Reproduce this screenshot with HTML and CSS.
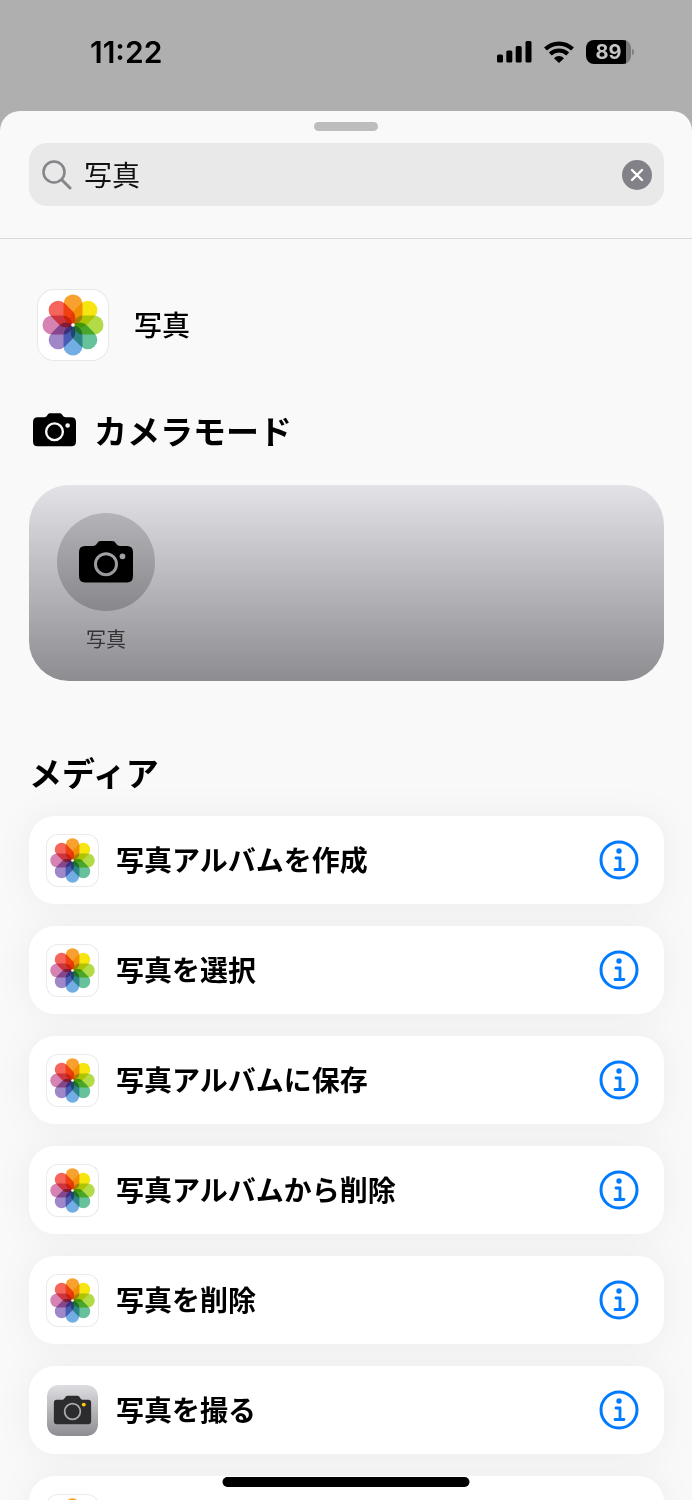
FILE: index.html
```html
<!DOCTYPE html>
<html lang="ja">
  <head>
    <meta charset="UTF-8" />
    <meta name="viewport" content="width=device-width, initial-scale=1.0" />
    <title>写真</title>
    <link rel="stylesheet" href="styles.css" />
  </head>
  <body>
    <!-- shared icons -->
    <svg class="sprite" aria-hidden="true">
      <defs>
        <linearGradient id="steel" x1="0" y1="0" x2="0" y2="1">
          <stop offset="0" stop-color="#dedde2" />
          <stop offset="1" stop-color="#8e8d92" />
        </linearGradient>
      </defs>
      <symbol id="photos" viewBox="-35 -35 70 70">
        <g class="petals">
          <rect x="-9.5" y="-30.5" width="19" height="30" rx="9.5" fill="#f9a12f" />
          <rect x="-9.5" y="-30.5" width="19" height="30" rx="9.5" fill="#f6e50f" transform="rotate(45)" />
          <rect x="-9.5" y="-30.5" width="19" height="30" rx="9.5" fill="#b3da47" transform="rotate(90)" />
          <rect x="-9.5" y="-30.5" width="19" height="30" rx="9.5" fill="#67c29b" transform="rotate(135)" />
          <rect x="-9.5" y="-30.5" width="19" height="30" rx="9.5" fill="#72ade4" transform="rotate(180)" />
          <rect x="-9.5" y="-30.5" width="19" height="30" rx="9.5" fill="#a088c8" transform="rotate(225)" />
          <rect x="-9.5" y="-30.5" width="19" height="30" rx="9.5" fill="#d583b2" transform="rotate(270)" />
          <rect x="-9.5" y="-30.5" width="19" height="30" rx="9.5" fill="#f5655c" transform="rotate(315)" />
        </g>
        <circle r="1.800" fill="#fff" />
      </symbol>
      <symbol id="camera" viewBox="0 0 54 42">
        <path fill="currentColor" fill-rule="evenodd" d="M6 5H14C16 5 17 4 18 2.500C19 .8 20 0 22 0H33C35 0 36 .8 37 2.500C38 4 39 5 41 5H48Q54 5 54 11V35Q54 41.500 48 41.500H6Q0 41.500 0 35V11Q0 5 6 5ZM27 11.200A12 12 0 1 0 27 35.200A12 12 0 1 0 27 11.200ZM43.500 12.400A2.900 2.900 0 1 0 43.500 18.200A2.900 2.900 0 1 0 43.500 12.400Z" />
        <circle cx="27" cy="23.200" r="9" fill="currentColor" />
      </symbol>
      <symbol id="camera-app" viewBox="0 0 52 52">
        <rect width="52" height="52" rx="11" fill="url(#steel)" />
        <path fill="#2c2c2e" d="M10 15H16C18 15 18.500 11 21 11H31C33.500 11 34 15 36 15H42Q45 15 45 18V37Q45 40 42 40H10Q7 40 7 37V18Q7 15 10 15Z" />
        <circle cx="26" cy="27" r="8" fill="none" stroke="#aaa9ae" stroke-width="1.800" />
        <circle cx="37.500" cy="20" r="2" fill="#fc0" />
      </symbol>
      <symbol id="info" viewBox="0 0 40 40">
        <circle cx="20" cy="20" r="18" fill="none" stroke="currentColor" stroke-width="3" />
        <circle cx="20" cy="11" r="2.700" fill="currentColor" />
        <path d="M17 18H21V29M16 29.500H25" fill="none" stroke="currentColor" stroke-width="2.800" stroke-linecap="round" stroke-linejoin="round" />
      </symbol>
    </svg>

    <header class="status-bar">
      <time>11:22</time>
      <div class="status-icons">
        <svg width="35" height="22" viewBox="0 0 35 22">
          <rect y="13.500" width="6" height="8" rx="1.500" />
          <rect x="9.300" y="9.500" width="6" height="12" rx="1.500" />
          <rect x="18.700" y="5" width="6" height="16.500" rx="1.500" />
          <rect x="28.500" width="6" height="21.500" rx="1.500" />
        </svg>
        <svg width="30" height="22" viewBox="0 0 30 22">
          <g fill="none" stroke="#000" stroke-width="4.200">
            <path d="M1.500 8A19.500 19.500 0 0 1 28.500 8" />
            <path d="M6.300 13A12.500 12.500 0 0 1 23.700 13" />
          </g>
          <path d="M15 22L10 17.200A7 7 0 0 1 20 17.200Z" />
        </svg>
        <div class="battery"><span>89</span></div>
      </div>
    </header>

    <main class="sheet">
      <div class="grabber"></div>
      <form class="search">
        <svg width="30" height="30" viewBox="0 0 30 30" fill="none" stroke="#85858a" stroke-width="2.600" stroke-linecap="round">
          <circle cx="12" cy="12" r="10.500" />
          <path d="M20 20L28 28" stroke-width="3" />
        </svg>
        <input type="text" aria-label="検索" value="写真" />
        <button type="reset" class="clear" aria-label="消去">
          <svg width="30" height="30" viewBox="0 0 30 30">
            <circle cx="15" cy="15" r="15" fill="#828187" />
            <path d="M10 10L20 20M20 10L10 20" stroke="#fff" stroke-width="2.400" stroke-linecap="round" />
          </svg>
        </button>
      </form>

      <div class="results">
        <a href="#" class="app">
          <svg class="app-icon"><use href="#photos" /></svg>
          <span>写真</span>
        </a>

        <h2 class="mode-title">
          <svg><use href="#camera" /></svg>
          カメラモード
        </h2>
        <section class="mode-card">
          <button class="mode">
            <span class="mode-icon"><svg width="54" height="42"><use href="#camera" /></svg></span>
            写真
          </button>
        </section>

        <h2 class="media-title">メディア</h2>
        <ul class="actions">
          <li>
            <svg class="action-icon"><use href="#photos" /></svg>
            <span>写真アルバムを作成</span>
            <button aria-label="情報"><svg><use href="#info" /></svg></button>
          </li>
          <li>
            <svg class="action-icon"><use href="#photos" /></svg>
            <span>写真を選択</span>
            <button aria-label="情報"><svg><use href="#info" /></svg></button>
          </li>
          <li>
            <svg class="action-icon"><use href="#photos" /></svg>
            <span>写真アルバムに保存</span>
            <button aria-label="情報"><svg><use href="#info" /></svg></button>
          </li>
          <li>
            <svg class="action-icon"><use href="#photos" /></svg>
            <span>写真アルバムから削除</span>
            <button aria-label="情報"><svg><use href="#info" /></svg></button>
          </li>
          <li>
            <svg class="action-icon"><use href="#photos" /></svg>
            <span>写真を削除</span>
            <button aria-label="情報"><svg><use href="#info" /></svg></button>
          </li>
          <li>
            <svg class="action-icon camera"><use href="#camera-app" /></svg>
            <span>写真を撮る</span>
            <button aria-label="情報"><svg><use href="#info" /></svg></button>
          </li>
          <li>
            <svg class="action-icon"><use href="#photos" /></svg>
            <span></span>
            <button aria-label="情報"><svg><use href="#info" /></svg></button>
          </li>
        </ul>
      </div>
    </main>

    <div class="home-indicator"></div>
  </body>
</html>
```
FILE: styles.css
```css
* {
  box-sizing: border-box;
}

body {
  margin: 0;
  height: 100vh;
  overflow: hidden;
  display: flex;
  flex-direction: column;
  background: #afafb0;
  color: #000;
  font-family: "Noto Sans CJK JP", sans-serif;
}

svg {
  display: block;
  flex-shrink: 0;
}

button {
  padding: 0;
  border: none;
  background: none;
  color: inherit;
  font-family: inherit;
  cursor: pointer;
}

h2 {
  margin: 0;
  font-size: 33px;
  font-weight: 600;
  line-height: 44px;
}

.sprite {
  position: absolute;
  width: 0;
  height: 0;
}

.petals {
  isolation: isolate;
}

.petals rect {
  mix-blend-mode: multiply;
}

/* status bar */
.status-bar {
  display: flex;
  justify-content: space-between;
  align-items: center;
  flex-shrink: 0;
  height: 111px;
  padding: 0 61px 8px 90px;
  font-family: Inter, sans-serif;
}

.status-bar time {
  font-size: 30px;
  font-weight: 600;
}

.status-icons {
  display: flex;
  align-items: center;
  gap: 12px;
}

.battery {
  position: relative;
  width: 45px;
  height: 24px;
  border-radius: 8px;
  background: linear-gradient(to right, #000 40px, #79797b 40px);
  color: #c4c4c5;
  font-size: 20px;
  font-weight: 700;
  line-height: 24px;
  text-align: center;
}

.battery::after {
  content: "";
  position: absolute;
  top: 9px;
  right: -3px;
  width: 2px;
  height: 6px;
  border-radius: 0 2px 2px 0;
  background: #818182;
}

/* sheet */
.sheet {
  flex: 1;
  min-height: 0;
  overflow: hidden;
  padding-top: 11px;
  border-radius: 20px 20px 0 0;
  background: #f9f9f9;
}

.grabber {
  width: 64px;
  height: 9px;
  margin: 0 auto 12px;
  border-radius: 5px;
  background: #bdbdbe;
}

.search {
  display: flex;
  align-items: center;
  gap: 12px;
  height: 63px;
  margin: 0 28px 32px 29px;
  padding: 0 12px 0 13px;
  border-radius: 18px;
  background: #e9e9ea;
}

.search input {
  flex: 1;
  min-width: 0;
  height: 40px;
  padding: 0 0 2px;
  border: none;
  outline: none;
  background: none;
  color: #111;
  font-family: inherit;
  font-size: 28px;
  font-weight: 400;
}

.results {
  padding: 51px 28px 0 29px;
  border-top: 1px solid #dadadb;
}

.app {
  display: flex;
  align-items: center;
  gap: 26px;
  margin: 0 9px 48px;
  color: inherit;
  font-size: 28px;
  font-weight: 500;
  line-height: 40px;
  text-decoration: none;
}

.app span,
.actions span {
  padding-bottom: 2px;
}

.app-icon {
  width: 70px;
  height: 70px;
  border-radius: 16px;
  background: #fff;
  box-shadow: 0 0 0 1px #e8e8e8;
}

.mode-title {
  display: flex;
  align-items: center;
  gap: 18px;
  margin: 0 4px 33px;
}

.mode-title svg {
  width: 43px;
  height: 34px;
}

.mode-card {
  display: flex;
  height: 196px;
  padding: 28px;
  border-radius: 40px;
  background: linear-gradient(#e2e2e7, #8d8c91);
}

.mode {
  display: flex;
  flex-direction: column;
  align-items: center;
  gap: 14px;
  color: #333336;
  font-size: 20px;
  line-height: 28px;
}

.mode-icon {
  display: flex;
  align-items: center;
  justify-content: center;
  width: 98px;
  height: 98px;
  border-radius: 50%;
  background: linear-gradient(#b4b3b8, #88878c);
  color: #000;
}

.media-title {
  margin: 69px 0 22px;
}

.actions {
  display: grid;
  gap: 22px;
  margin: 0;
  padding: 0;
  list-style: none;
  filter: drop-shadow(0 0 16px rgba(0, 0, 0, 0.05));
}

.actions li {
  display: flex;
  align-items: center;
  gap: 18px;
  height: 88px;
  padding: 0 25px 0 18px;
  border-radius: 26px;
  background: #fff;
  font-size: 28px;
  font-weight: 600;
  line-height: 40px;
}

.actions span {
  flex: 1;
}

.action-icon {
  width: 51px;
  height: 51px;
  border-radius: 11px;
  box-shadow: 0 0 0 1px #eaeaea;
}

.action-icon.camera {
  box-shadow: none;
}

.actions button {
  color: #007aff;
}

.actions button svg {
  width: 40px;
  height: 40px;
}

.home-indicator {
  position: fixed;
  bottom: 13px;
  left: 50%;
  width: 247px;
  height: 10px;
  border-radius: 5px;
  background: #000;
  transform: translateX(-50%);
}
```
